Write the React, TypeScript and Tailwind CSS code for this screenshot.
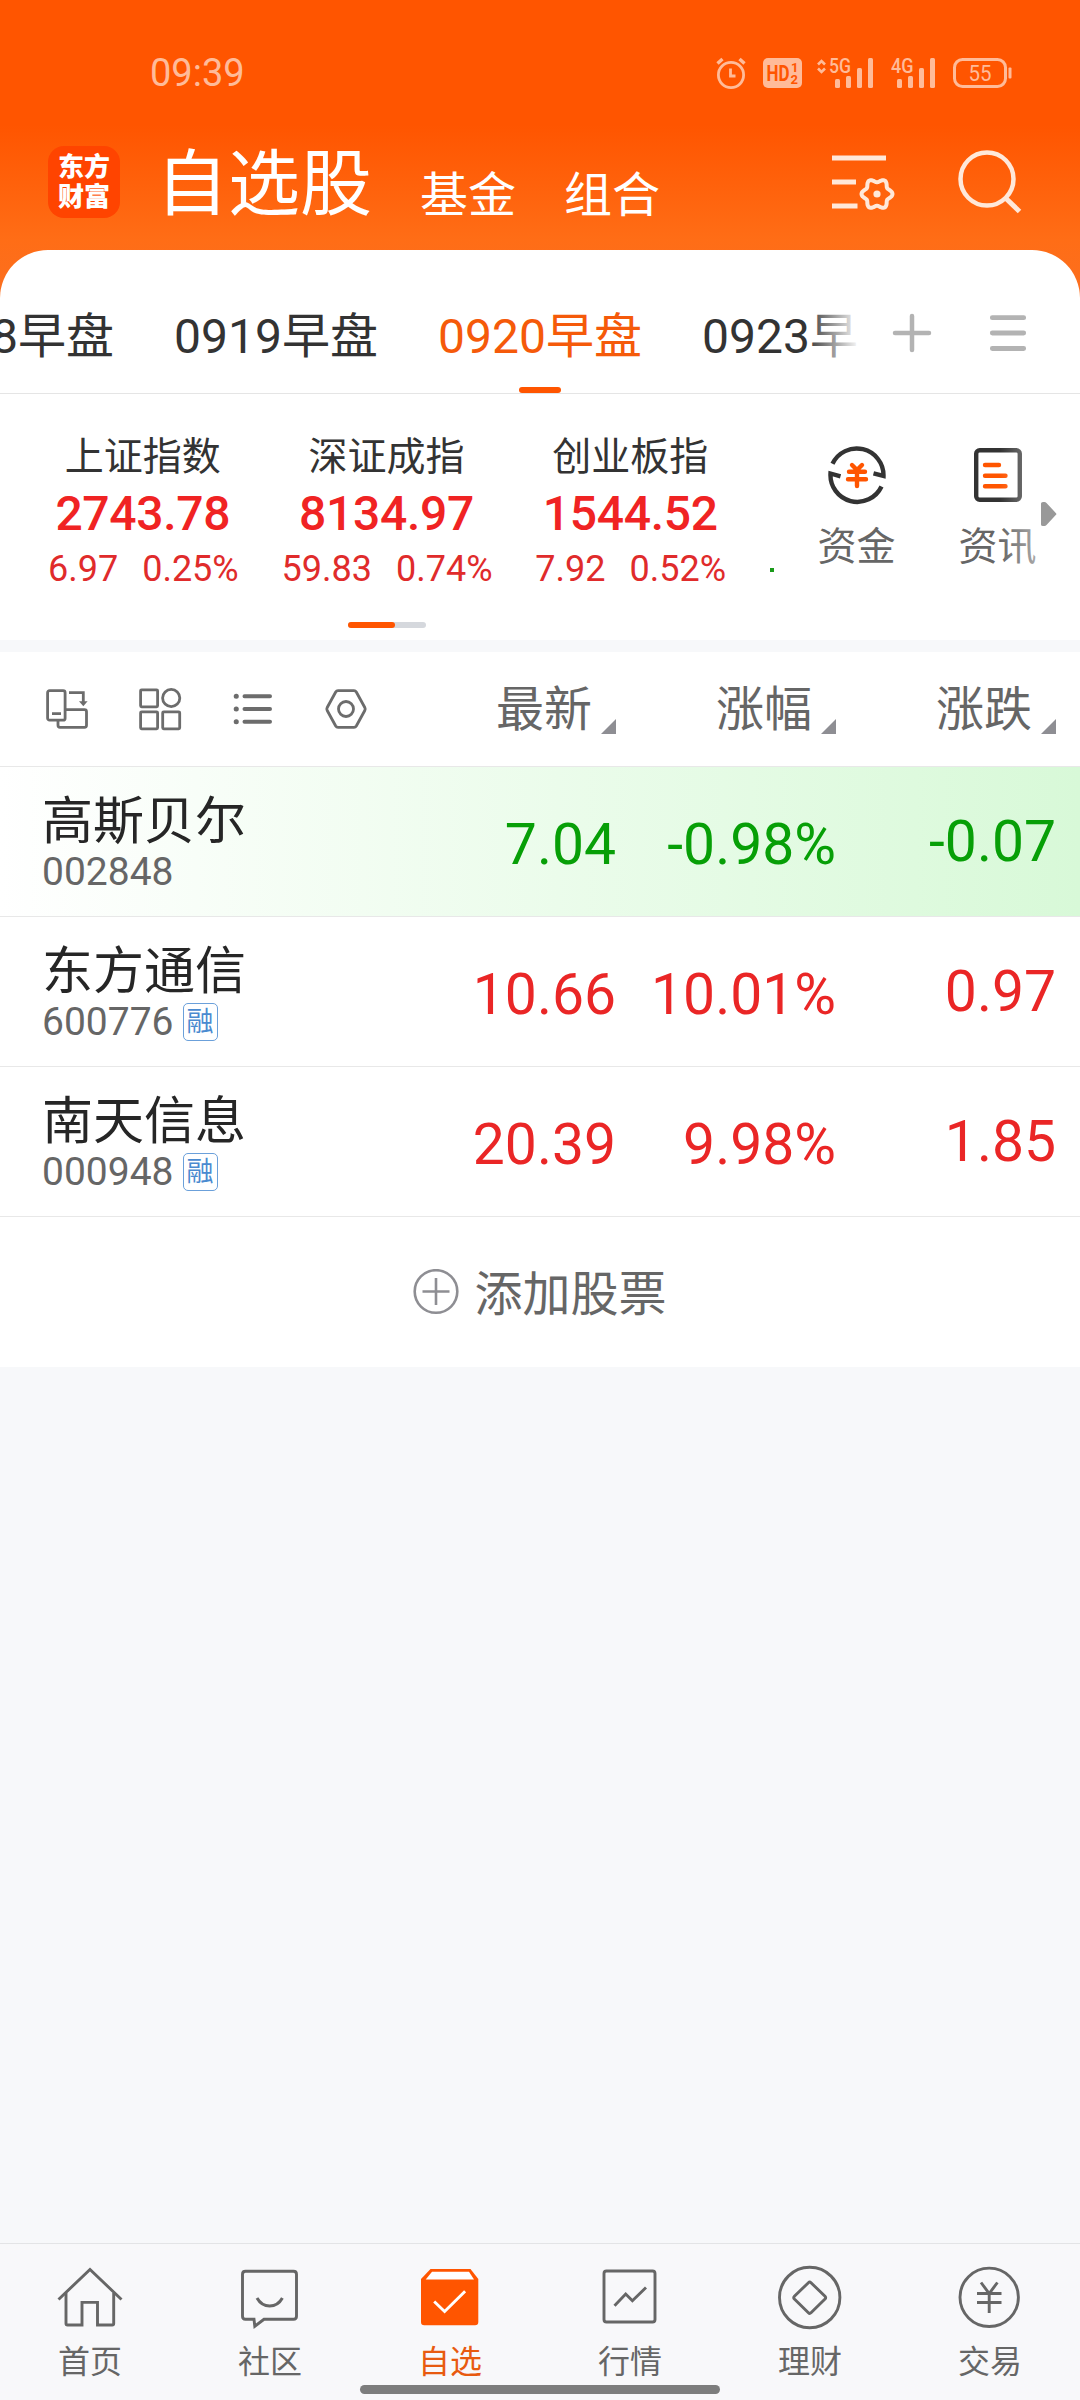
import React from 'react';

interface IndexQuote {
  name: string;
  value: string;
  change: string;
  percent: string;
}

interface Stock {
  name: string;
  code: string;
  margin: boolean;
  price: string;
  percent: string;
  change: string;
  down?: boolean;
}

const groups = ['0918早盘', '0919早盘', '0920早盘', '0923早盘'];

const indices: IndexQuote[] = [
  { name: '上证指数', value: '2743.78', change: '6.97', percent: '0.25%' },
  { name: '深证成指', value: '8134.97', change: '59.83', percent: '0.74%' },
  { name: '创业板指', value: '1544.52', change: '7.92', percent: '0.52%' },
];

const stocks: Stock[] = [
  { name: '高斯贝尔', code: '002848', margin: false, price: '7.04', percent: '-0.98%', change: '-0.07', down: true },
  { name: '东方通信', code: '600776', margin: true, price: '10.66', percent: '10.01%', change: '0.97' },
  { name: '南天信息', code: '000948', margin: true, price: '20.39', percent: '9.98%', change: '1.85' },
];

// engranaje de seis lóbulos
const gearPoints = Array.from({ length: 72 }, (_, i) => {
  const a = (i * Math.PI) / 36;
  const r = 13.6 + 1.9 * Math.cos(6 * a);
  return `${(46 + r * Math.cos(a)).toFixed(2)},${(48 + r * Math.sin(a)).toFixed(2)}`;
}).join(' ');

const StatusBar = () => (
  <div className="flex h-[146px] items-center justify-between pl-[150px] pr-[68px] text-[#ffbb99]">
    <span className="text-[38px] leading-none">09:39</span>
    <div className="flex items-center">
      {/* alarma */}
      <svg className="mr-[17px]" width="30" height="32" viewBox="0 0 30 32" fill="none" stroke="currentColor" strokeWidth="2.8">
        <circle cx="15" cy="18" r="12.6" />
        <path d="M14.500 11.500V19h5" />
        <path d="M1.500 6.500l5-4.500M28.500 6.500l-5-4.500" strokeWidth="3.4" />
      </svg>
      <svg className="mr-[15px]" width="39" height="30" viewBox="0 0 39 30">
        <rect width="39" height="30" rx="5" fill="currentColor" />
        <g fill="#ff5500" fontWeight="700">
          <text x="3.500" y="23" fontSize="22" textLength="23" lengthAdjust="spacingAndGlyphs">HD</text>
          <text x="28" y="13.500" fontSize="13">1</text>
          <text x="27.500" y="25.500" fontSize="13">2</text>
        </g>
      </svg>
      <svg className="mr-[18px]" width="56" height="42" viewBox="0 -6 56 42" fill="currentColor">
        <path d="M1 6.500L4.500 3 8 6.500M1 10.500l3.500 3.500L8 10.500" fill="none" stroke="currentColor" strokeWidth="2.600" />
        <text x="12" y="15" fontSize="21" fontWeight="500" textLength="22" lengthAdjust="spacingAndGlyphs">5G</text>
        <rect x="18" y="21" width="5" height="9" rx="1.500" />
        <rect x="29" y="18" width="5" height="12" rx="1.500" />
        <rect x="40" y="10" width="5" height="20" rx="1.500" />
        <rect x="51" y="0" width="5" height="30" rx="1.500" />
      </svg>
      <svg className="mr-[17px]" width="45" height="42" viewBox="0 -6 45 42" fill="currentColor">
        <text x="0" y="15" fontSize="21" fontWeight="500" textLength="22.500" lengthAdjust="spacingAndGlyphs">4G</text>
        <rect x="6" y="21" width="5" height="9" rx="1.500" />
        <rect x="17" y="18" width="5" height="12" rx="1.500" />
        <rect x="28" y="10" width="5" height="20" rx="1.500" />
        <rect x="39" y="0" width="5" height="30" rx="1.500" />
      </svg>
      <svg width="59" height="30" viewBox="0 0 59 30" fill="currentColor">
        <rect x="1.500" y="1.500" width="51" height="27" rx="8" fill="none" stroke="currentColor" strokeWidth="3" />
        <rect x="55.500" y="9.500" width="3" height="11" rx="1" />
        <text x="27" y="23" fontSize="22" textAnchor="middle" textLength="23" lengthAdjust="spacingAndGlyphs">55</text>
      </svg>
    </div>
  </div>
);

const TopNav = () => (
  <div className="flex h-[104px] items-start pl-[48px] text-white">
    <div className="flex h-[72px] w-[72px] flex-col items-center justify-center rounded-[16px] bg-[#ff4400] text-[26px] font-black leading-[30px]">
      <span>东方</span>
      <span>财富</span>
    </div>
    <h1 className="-mt-[1px] ml-[36px] text-[72px] leading-[80px]">自选股</h1>
    <span className="ml-[48px] mt-[20px] text-[48px] leading-[60px]">基金</span>
    <span className="ml-[48px] mt-[20px] text-[48px] leading-[60px]">组合</span>
    <div className="ml-auto flex pr-[58px] text-[#ffe8d9]">
      <svg className="mr-[59px]" width="66" height="70" viewBox="0 0 66 70" fill="none" stroke="currentColor" strokeWidth="4.800">
        <path d="M1 12h54M1 36h24M1 60h25.500" />
        <polygon points={gearPoints} strokeWidth="4" strokeLinejoin="round" />
        <circle cx="46" cy="48" r="3.600" fill="currentColor" stroke="none" />
      </svg>
      <svg width="66" height="70" viewBox="0 0 66 70" fill="none" stroke="currentColor" strokeWidth="4.500">
        <circle cx="31" cy="33" r="26.500" />
        <path d="M49.500 52l14 13.500" strokeWidth="5" />
      </svg>
    </div>
  </div>
);

const GroupTabs = () => (
  <div className="relative flex h-[144px] overflow-hidden border-b border-[#e5e5e5]">
    <div className="-ml-[90px] flex w-[950px] shrink-0 gap-[60px] overflow-hidden pt-[57px] text-[48px] leading-[60px] text-[#333]">
      {groups.map((group) => (
        <span
          key={group}
          className={
            group === '0920早盘'
              ? 'relative w-[204px] shrink-0 whitespace-nowrap text-[#f55a0a]'
              : 'w-[204px] shrink-0 whitespace-nowrap'
          }
        >
          {group}
          {group === '0920早盘' && (
            <i className="absolute left-[81px] top-[80px] h-[6px] w-[42px] rounded-full bg-[#ff5500]" />
          )}
        </span>
      ))}
    </div>
    <div className="absolute left-[806px] top-0 h-[130px] w-[54px] bg-linear-to-r from-white/0 to-white" />
    <svg className="ml-[32px] mt-[63px]" width="40" height="40" viewBox="0 0 40 40" stroke="#b3b3b3" strokeWidth="4.500" strokeLinecap="round">
      <path d="M20 3v34M3 20h34" />
    </svg>
    <svg className="ml-[56px] mt-[63px]" width="40" height="40" viewBox="0 0 40 40" stroke="#b3b3b3" strokeWidth="4.800" strokeLinecap="round">
      <path d="M4.300 4.700h31.400M4.300 20h31.400M4.300 35.500h31.400" />
    </svg>
  </div>
);

const IndexPanel = () => (
  <div className="relative flex h-[246px] pl-[21px] pt-[37px]">
    {indices.map((item) => (
      <div key={item.name} className="w-[243.7px] shrink-0 text-center">
        <p className="text-[39px] leading-[52px] text-[#333]">{item.name}</p>
        <p className="text-[48px] font-medium leading-[62px] tracking-[-0.3px] text-[#f02323]">{item.value}</p>
        <p className="flex justify-center gap-[24px] pl-[1px] text-[36px] leading-[48px] text-[#e02b2b]">
          <span>{item.change}</span>
          <span>{item.percent}</span>
        </p>
      </div>
    ))}
    <i className="ml-[18px] mt-[137px] h-[4px] w-[4px] bg-[#1a9a1a]" />
    <div className="ml-[12px] flex pt-[14px] text-[39px] leading-[48px] text-[#666]">
      <div className="flex w-[141px] flex-col items-center">
        <svg width="60" height="60" viewBox="0 0 60 60" fill="none" stroke="#333" strokeWidth="4.400">
          <path d="M5.500 18.800A26.800 26.800 0 0 1 56.500 31l-10-2.600" />
          <path d="M54.500 41.500A26.800 26.800 0 0 1 3.500 28.500l10 2.800" />
          <path d="M25 20l5 5 5-5M22 26.700h16M21 34.300h18M30 26v15" stroke="#ff5500" strokeLinecap="round" />
        </svg>
        <span className="mt-[18px]">资金</span>
      </div>
      <div className="flex w-[141px] flex-col items-center">
        <svg width="60" height="60" viewBox="0 0 60 60" fill="none" stroke="#333" strokeWidth="4.400">
          <rect x="8.200" y="5.200" width="43.600" height="49.500" rx="3.500" />
          <path d="M17 20h14M17 30.700h20.500M17 41.200h20.500" stroke="#ff5500" strokeLinecap="round" />
        </svg>
        <span className="mt-[18px]">资讯</span>
      </div>
    </div>
    <div className="absolute right-[38px] top-[40px] h-[140px] w-[42px] bg-linear-to-r from-white/0 to-white/50" />
    <svg className="absolute left-[1041px] top-[108px]" width="16" height="24" viewBox="0 0 16 24" fill="#999">
      <path d="M0 1.500Q0 0 2 0h1.500q1 0 2 1L15 11.200q.8.800 0 1.600L5.500 23q-1 1-2 1H2q-2 0-2-1.500z" />
    </svg>
    <div className="absolute left-[348px] top-[228px] h-[6px] w-[78px] rounded-full bg-[#d5d8dd]">
      <div className="h-[6px] w-[47px] rounded-full bg-[#ff5500]" />
    </div>
  </div>
);

const HeaderCell = ({ label }: { label: string }) => (
  <div className="flex w-[220px] items-center justify-end pt-[2px]">
    <span>{label}</span>
    <svg className="ml-[9px] mt-[33px]" width="15" height="15" viewBox="0 0 15 15" fill="#8e8e93">
      <path d="M15 0v15H0z" />
    </svg>
  </div>
);

const ListHeader = () => (
  <div className="flex h-[115px] items-center border-b border-[#e8e8e8] pl-[44px] pr-[24px] text-[48px] text-[#666]">
    <div className="flex gap-[45px]">
      <svg width="48" height="48" viewBox="0 0 48 48" fill="none" stroke="#6c6c6c" strokeWidth="2.800">
        <rect x="3.600" y="5.700" width="17.500" height="29.500" rx="2" />
        <path d="M8 28.700h9M21.600 24.700H40.500q2 0 2 2v13.600q0 2-2 2H16q-2 0-2-2v-5" />
        <path d="M25 7.700h14.300V17" />
        <path d="M35 16.300h8.600l-4.300 5z" fill="#6c6c6c" stroke="none" />
      </svg>
      <svg width="48" height="48" viewBox="0 0 48 48" fill="none" stroke="#6c6c6c" strokeWidth="2.800">
        <rect x="3.600" y="4.800" width="17" height="17" rx="1" />
        <circle cx="34.200" cy="13" r="8.600" />
        <rect x="3.600" y="26.800" width="17" height="17" rx="1" />
        <rect x="25.700" y="26.800" width="17" height="17" rx="1" />
      </svg>
      <svg width="48" height="48" viewBox="0 0 48 48" fill="none" stroke="#6c6c6c" strokeWidth="4" strokeLinecap="round">
        <path d="M14.500 11.200h25.500M14.500 24h25.500M14.500 36.800h25.500" />
        <path d="M6.200 11.200h.1M6.200 24h.1M6.200 36.800h.1" strokeWidth="5" />
      </svg>
      <svg className="-ml-[1px]" width="48" height="48" viewBox="0 0 48 48" fill="none" stroke="#6c6c6c" strokeWidth="2.800" strokeLinejoin="round">
        <path d="M16 5.700h16q1.500 0 2.300 1.300L42.800 22.500q.8 1.500 0 3L34.300 41q-.8 1.300-2.300 1.300H16q-1.500 0-2.300-1.300L5.200 25.500q-.8-1.500 0-3L13.700 7q.8-1.300 2.300-1.300z" />
        <circle cx="24" cy="24" r="7.500" />
      </svg>
    </div>
    <div className="ml-auto flex">
      <HeaderCell label="最新" />
      <HeaderCell label="涨幅" />
      <HeaderCell label="涨跌" />
    </div>
  </div>
);

const StockRow = ({ stock }: { stock: Stock }) => (
  <div
    className={
      stock.down
        ? 'flex h-[150px] border-b border-[#e8e8e8] bg-linear-to-r from-white to-[#d8f9d8] pl-[42px] pr-[24px] text-[#079f07]'
        : 'flex h-[150px] border-b border-[#e8e8e8] pl-[42px] pr-[24px] text-[#ea2626]'
    }
  >
    <div className="pt-[25px]">
      <p className="text-[51px] leading-[60px] text-[#262626]">{stock.name}</p>
      <p className="flex items-center text-[39px] leading-[40px] text-[#666]">
        {stock.code}
        {stock.margin && (
          <span className="ml-[9px] flex h-[38px] w-[35px] items-center justify-center rounded-[5px] border border-[#6ba0da] text-[27px] leading-none text-[#4a8ad0]">
            融
          </span>
        )}
      </p>
    </div>
    <div className="ml-auto flex items-center text-right text-[57px] leading-[64px]">
      <span className="w-[220px] pt-[6px]">{stock.price}</span>
      <span className="w-[220px] pt-[6px]">{stock.percent}</span>
      <span className="w-[220px]">{stock.change}</span>
    </div>
  </div>
);

const BottomNav = () => {
  const items = [
    {
      label: '首页',
      icon: (
        <>
          <path d="M4.500 37.500L36 7.500l31.500 30" />
          <path d="M12 31v30.500q0 1.500 1.500 1.500H28V40.400h15.500V63h14.700q1.500 0 1.500-1.500V31" />
        </>
      ),
    },
    {
      label: '社区',
      icon: (
        <>
          <path d="M11.500 9.300h48q3 0 3 3v42q0 3-3 3H30l-9.200 7-.8-7h-8.500q-3 0-3-3v-42q0-3 3-3z" />
          <path d="M23 36q4.500 8 12.700 8t12.700-8" strokeWidth="3" />
        </>
      ),
    },
    {
      label: '自选',
      active: true,
      icon: (
        <>
          <path d="M16.500 7h40L64.300 17v43q0 3.300-3.300 3.300H10.300Q7 63.300 7 60V17z" fill="#ff5500" stroke="none" />
          <path d="M18 9.800h37l5 7.700H11.700z" fill="#fff" stroke="none" />
          <path d="M20.200 39.500l10.400 10 20.500-20.300" stroke="#fff" />
        </>
      ),
    },
    {
      label: '行情',
      icon: (
        <>
          <rect x="10" y="9" width="51" height="51" rx="2.500" />
          <path d="M20.500 43.700l11.200-11.700 6.700 6.700L52 25.500" />
        </>
      ),
    },
    {
      label: '理财',
      icon: (
        <>
          <circle cx="35.700" cy="35.500" r="30.200" />
          <path d="M34.400 20.700q1.300-1.300 2.600 0l14 13.600q1.300 1.400 0 2.800l-14 13.600q-1.300 1.300-2.600 0l-14-13.600q-1.300-1.400 0-2.800z" />
        </>
      ),
    },
    {
      label: '交易',
      icon: (
        <>
          <circle cx="35.200" cy="35.300" r="29.200" />
          <path d="M27 20.500l8.200 11 8.200-11M23 31.500h24.500M23 40.500h24.500M35.200 31v20" />
        </>
      ),
    },
  ];

  return (
    <div className="relative mt-auto flex h-[157px] border-t border-[#e3e4e6] bg-[#f8f8fa] pt-[18px]">
      {items.map((item) => (
        <div
          key={item.label}
          className={
            item.active
              ? 'flex w-[180px] flex-col items-center text-[#e85a10]'
              : 'flex w-[180px] flex-col items-center text-[#666]'
          }
        >
          <svg width="72" height="72" viewBox="0 0 72 72" fill="none" stroke="currentColor" strokeWidth="2.900">
            {item.icon}
          </svg>
          <span className="mt-[8px] text-[32px] leading-[40px]">{item.label}</span>
        </div>
      ))}
      <div className="absolute bottom-[6px] left-[360px] h-[9px] w-[360px] rounded-full bg-[#7d7d7d]" />
    </div>
  );
};

const App = () => {
  return (
    <div className="flex h-[2400px] w-[1080px] flex-col overflow-hidden bg-[#f7f8fa] font-[Roboto,'Noto_Sans_CJK_SC',sans-serif]">
      <div className="h-[300px] shrink-0 bg-[linear-gradient(#ff5500_0,#ff5500_125px,#ff6d16_240px,#fb6f20_300px)]">
        <StatusBar />
        <TopNav />
      </div>
      <div className="-mt-[50px] rounded-t-[48px] bg-white">
        <GroupTabs />
        <IndexPanel />
      </div>
      <div className="mt-[12px] bg-white">
        <ListHeader />
        {stocks.map((stock) => (
          <StockRow key={stock.code} stock={stock} />
        ))}
        <div className="flex h-[150px] items-center justify-center text-[48px] text-[#666]">
          <svg className="mr-[15px]" width="46" height="46" viewBox="0 0 46 46" fill="none" stroke="#8e8e93" strokeWidth="2.600">
            <circle cx="23" cy="22.500" r="21.300" />
            <path d="M23 9v27M9.500 22.500h27" />
          </svg>
          <span className="pt-[5px]">添加股票</span>
        </div>
      </div>
      <BottomNav />
    </div>
  );
};

export default App;
